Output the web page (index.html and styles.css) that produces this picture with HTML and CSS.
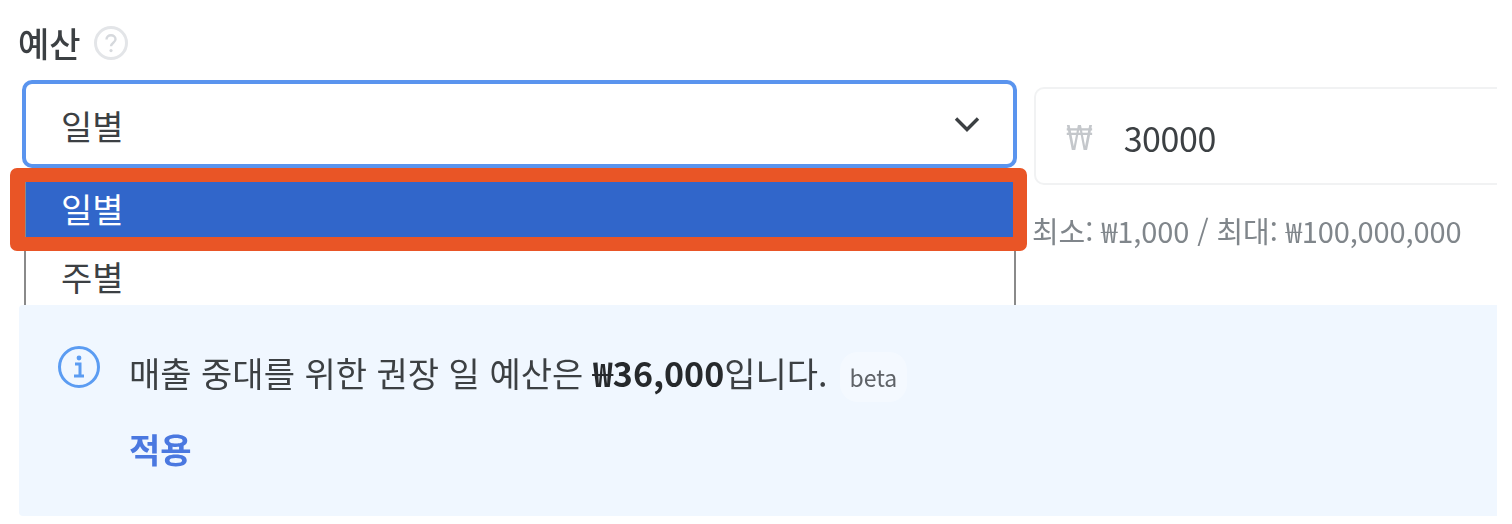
FILE: index.html
```html
<!DOCTYPE html>
<html lang="ko">
<head>
<meta charset="utf-8">
<title>예산</title>
<link rel="stylesheet" href="styles.css">
</head>
<body>
<main class="page">
  <div class="label-row">
    <span class="label">예산</span>
    <svg class="help" viewBox="0 0 36 36" aria-hidden="true">
      <circle cx="18" cy="18" r="15.5" fill="none" stroke="#e3e5e8" stroke-width="3"/>
      <path d="M13.5 14.5c0-2.6 2-4.2 4.5-4.2s4.5 1.6 4.5 4c0 3.4-4.5 3.4-4.5 7" fill="none" stroke="#d6d9dd" stroke-width="2.4"/>
      <circle cx="18" cy="25.6" r="1.6" fill="#d6d9dd"/>
    </svg>
  </div>
  <div class="fields">
    <div class="select-col">
      <div class="select">
        <span>일별</span>
        <svg class="chevron" viewBox="0 0 26 16" aria-hidden="true">
          <path d="M2 2.5 13 13.5 24 2.5" fill="none" stroke="#3c4043" stroke-width="3.4"/>
        </svg>
      </div>
      <div class="menu">
        <div class="option selected">일별</div>
        <div class="option">주별</div>
      </div>
      <div class="highlight"></div>
    </div>
    <div class="amount-col">
      <div class="amount">
        <span class="won">₩</span>
        <span class="value">30000</span>
      </div>
      <p class="hint">최소: ₩1,000 / 최대: ₩100,000,000</p>
    </div>
  </div>
  <section class="notice">
    <svg class="info" viewBox="0 0 44 44" aria-hidden="true">
      <circle cx="22" cy="22" r="19.5" fill="none" stroke="#5b9cf2" stroke-width="3"/>
      <circle cx="22" cy="13" r="2.4" fill="#5b9cf2"/>
      <path d="M18 19h5v11M17 31h10" fill="none" stroke="#5b9cf2" stroke-width="3"/>
    </svg>
    <div class="notice-body">
      <p class="notice-text">매출 중대를 위한 권장 일 예산은 <strong>₩36,000</strong>입니다.<span class="beta">beta</span></p>
      <a class="apply">적용</a>
    </div>
  </section>
</main>
</body>
</html>
```

FILE: styles.css
```css
* { box-sizing: border-box; }
html, body { margin: 0; padding: 0; background: #fff; }
body {
  font-family: "Noto Sans CJK KR", "Noto Sans", sans-serif;
  color: #3c4043;
  overflow: hidden;
}
.page { width: 1497px; height: 516px; padding-left: 19px; overflow: hidden; filter: blur(0.5px); }
.label-row { display: flex; align-items: center; gap: 12px; height: 80px; padding-top: 6px; margin-left: -1px; }
.label { font-size: 34px; font-weight: 500; line-height: 1; color: #3c4043; }
.help { width: 36px; height: 36px; }
.fields { display: flex; gap: 17px; height: 225px; padding-left: 3px; }
.select-col { position: relative; flex: 0 0 995px; }
.select {
  height: 88px; display: flex; align-items: center; justify-content: space-between;
  padding: 2px 33px 0 35px; border: 4px solid #5a94ee; border-radius: 10px;
  font-size: 34px; background: #fff;
}
.chevron { width: 26px; height: 16px; margin-top: -2px; }
.menu {
  position: absolute; left: 2px; top: 88px; width: 992px; height: 137px;
  padding-top: 14px;
  border-left: 2px solid #8a8a8a; border-right: 2px solid #8a8a8a;
  background: #fff; font-size: 34px; overflow: hidden;
}
.option { height: 78px; padding-left: 35px; display: flex; align-items: center; }
.option.selected { height: 55px; padding-bottom: 2px; background: #3166ca; color: #fff; }
.highlight {
  position: absolute; left: -12px; top: 88px; width: 1017px; height: 83px;
  border: 14px solid #e95526; border-left-width: 15px; border-radius: 7px;
}
.amount-col { flex: 1; padding-top: 7px; }
.amount {
  height: 98px; display: flex; align-items: center; gap: 24px; padding-left: 30px; padding-top: 3px;
  border: 2px solid #f1f2f3; border-right: 0; border-radius: 10px 0 0 10px; font-size: 34px;
}
.won {
  display: inline-block; transform: scaleX(0.8); transform-origin: left center;
  color: #c4c7cb; font-family: "DejaVu Sans", sans-serif; font-size: 34px; line-height: 1;
}
.value { color: #3c4043; letter-spacing: -0.4px; }
.hint { margin: 27px 0 0 -2px; font-size: 29px; line-height: 36px; color: #80868b; white-space: nowrap; letter-spacing: -0.1px; }
.notice {
  display: flex; gap: 28px; height: 211px; padding: 41px 0 0 38px;
  background: #f0f7ff; border-radius: 4px 0 0 4px;
}
.info { width: 44px; height: 44px; flex: none; margin-top: -1px; }
.notice-body { display: flex; flex-direction: column; gap: 23px; }
.notice-text { margin: 0; font-size: 34px; line-height: 54px; color: #3c4043; white-space: nowrap; }
.notice-text strong { font-weight: 700; color: #26292c; }
.beta {
  margin-left: 12px; padding: 8px 10px; font-size: 23px; color: #5f6368;
  background: rgba(255, 255, 255, 0.3); border-radius: 18px;
}
.apply { font-size: 34px; font-weight: 700; line-height: 44px; color: #4a78e0; }
```
